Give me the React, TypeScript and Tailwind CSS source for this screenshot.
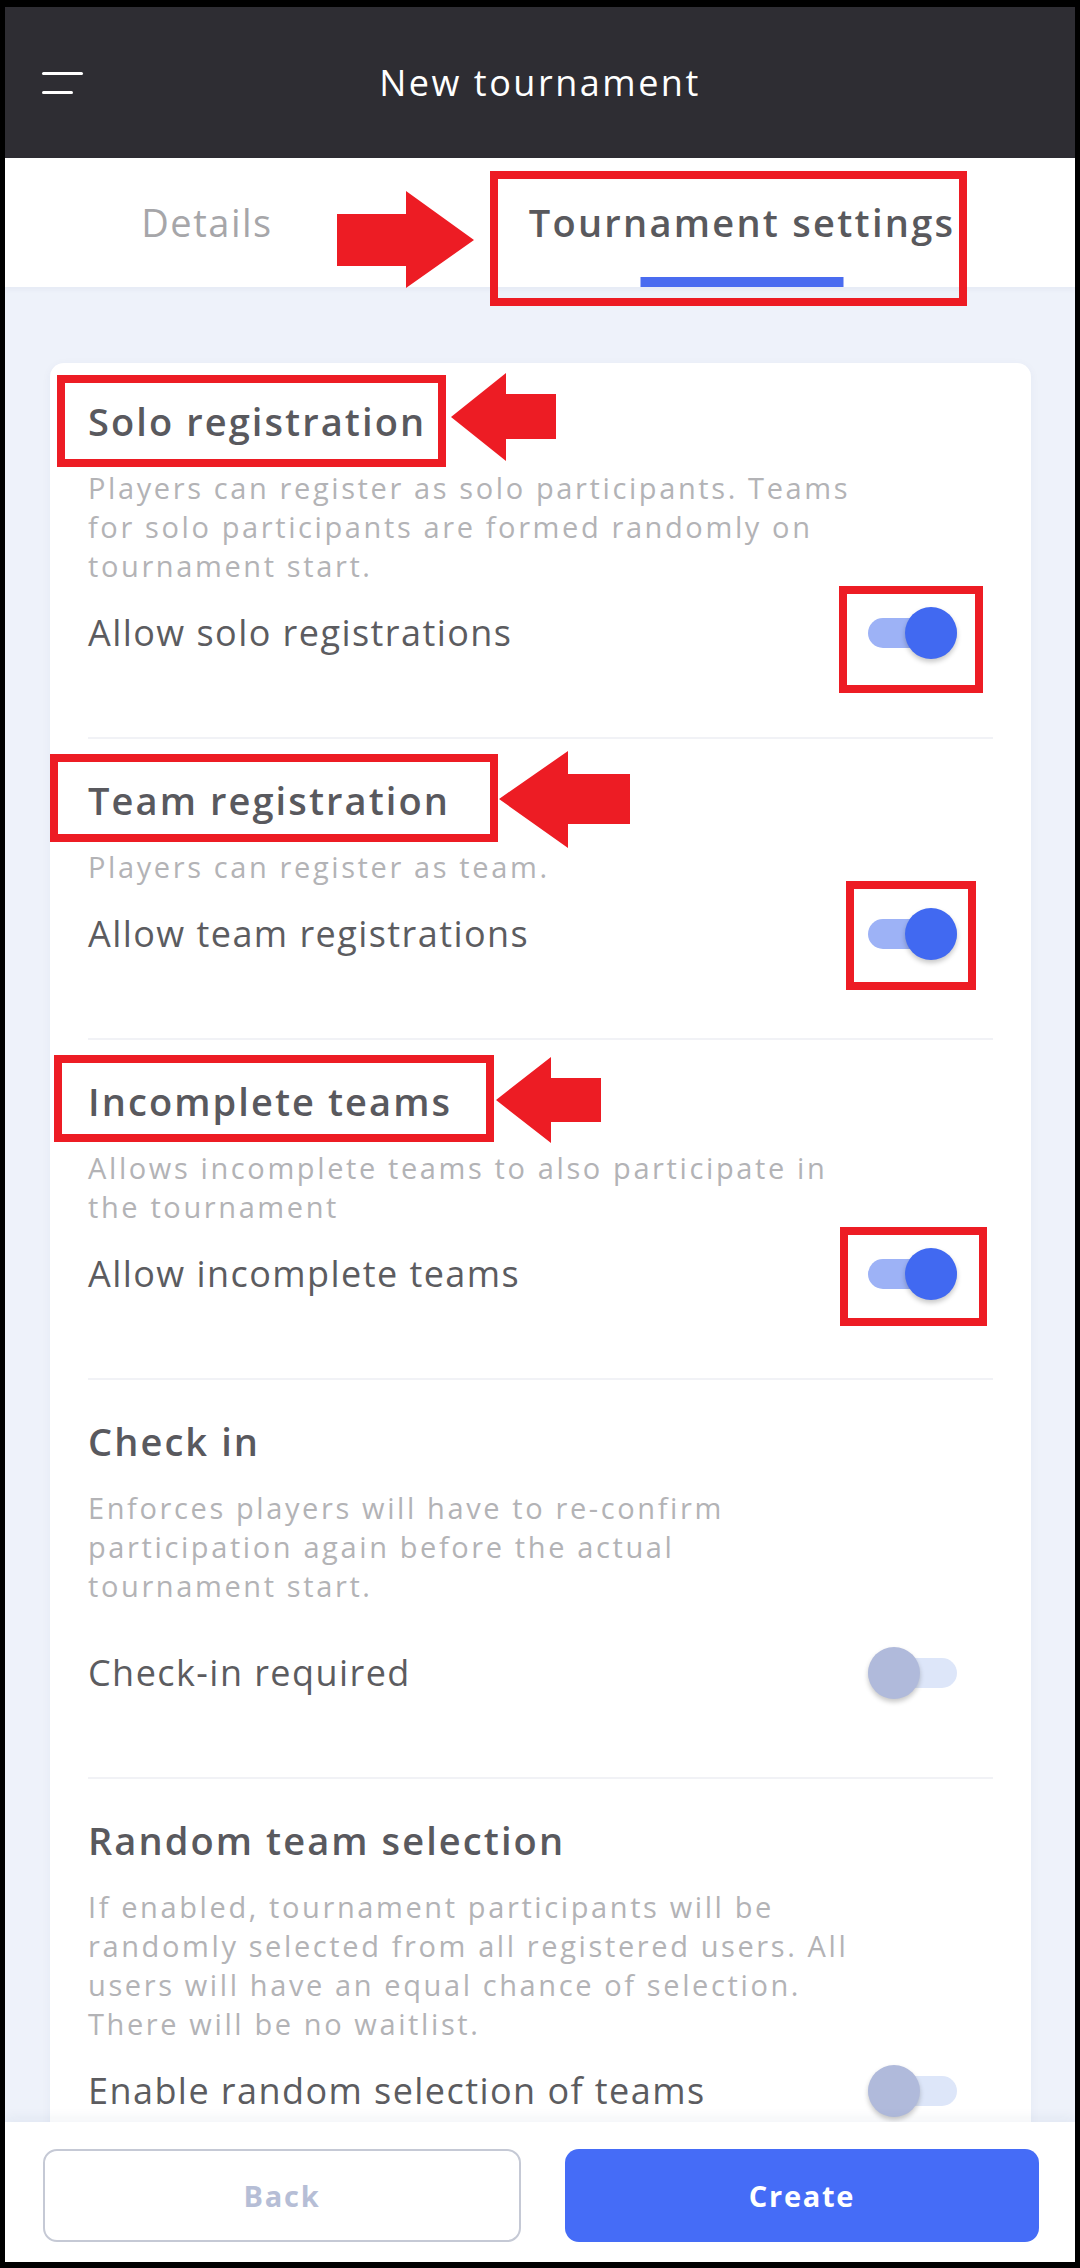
import React from 'react';

type Section = {
  title: string;
  lines: string[];
  label: string;
  on: boolean;
  extraGap?: boolean;
};

const SECTIONS: Section[] = [
  {
    title: 'Solo registration',
    lines: [
      'Players can register as solo participants. Teams',
      'for solo participants are formed randomly on',
      'tournament start.',
    ],
    label: 'Allow solo registrations',
    on: true,
  },
  {
    title: 'Team registration',
    lines: ['Players can register as team.'],
    label: 'Allow team registrations',
    on: true,
  },
  {
    title: 'Incomplete teams',
    lines: ['Allows incomplete teams to also participate in', 'the tournament'],
    label: 'Allow incomplete teams',
    on: true,
  },
  {
    title: 'Check in',
    lines: [
      'Enforces players will have to re-confirm',
      'participation again before the actual',
      'tournament start.',
    ],
    label: 'Check-in required',
    on: false,
    extraGap: true,
  },
  {
    title: 'Random team selection',
    lines: [
      'If enabled, tournament participants will be',
      'randomly selected from all registered users. All',
      'users will have an equal chance of selection.',
      'There will be no waitlist.',
    ],
    label: 'Enable random selection of teams',
    on: false,
  },
];

function Toggle({ on }: { on: boolean }) {
  return (
    <div className="relative w-[89px] h-[52px] flex items-center shrink-0">
      <div className={`w-full h-[30px] rounded-full ${on ? 'bg-[#9db2f6]' : 'bg-[#dde6f9]'}`} />
      <div
        className={`absolute top-0 w-[52px] h-[52px] rounded-full shadow-[0_3px_5px_rgba(0,0,0,0.22)] ${
          on ? 'right-0 bg-[#4169f1]' : 'left-0 bg-[#b0badb]'
        }`}
      />
    </div>
  );
}

function SettingSection({ s, first }: { s: Section; first: boolean }) {
  return (
    <div className={`${first ? 'pt-[35px]' : 'pt-[38px]'} pb-[77px] border-b-2 border-[#f1f2f6]`}>
      <h3 className="text-[38px] leading-[46px] font-semibold tracking-[0.055em] text-[#59595e]">{s.title}</h3>
      <p className="mt-[24px] text-[29px] leading-[39px] tracking-[0.09em] text-[#b3b3b6] whitespace-nowrap">
        {s.lines.map((l, i) => (
          <React.Fragment key={i}>
            {l}
            {i < s.lines.length - 1 && <br />}
          </React.Fragment>
        ))}
      </p>
      <div className={`${s.extraGap ? 'mt-[41px]' : 'mt-[21px]'} flex items-center justify-between pr-[36px]`}>
        <span className="text-[36px] tracking-[0.04em] text-[#5c5c60]">{s.label}</span>
        <Toggle on={s.on} />
      </div>
    </div>
  );
}

// red markup drawn over the screenshot
function Annotations() {
  const boxes: [number, number, number, number][] = [
    [490, 171, 967, 306],
    [57, 375, 446, 467],
    [839, 586, 983, 693],
    [50, 754, 498, 842],
    [846, 881, 976, 990],
    [54, 1055, 494, 1142],
    [840, 1227, 987, 1326],
  ];
  const arrows = [
    '337,214 406,214 406,191 474,240 406,288 406,266 337,266',
    '556,394 506,394 506,373 451,417 506,461 506,439 556,439',
    '630,774 568,774 568,751 499,799 568,848 568,824 630,824',
    '601,1078 551,1078 551,1057 496,1100 551,1143 551,1122 601,1122',
  ];
  return (
    <svg className="absolute inset-0 z-30 pointer-events-none" width={1080} height={2268} viewBox="0 0 1080 2268">
      {boxes.map(([x0, y0, x1, y1], i) => (
        <rect key={i} x={x0 + 4} y={y0 + 4} width={x1 - x0 - 8} height={y1 - y0 - 8} fill="none" stroke="#ed1c24" strokeWidth={8} />
      ))}
      {arrows.map((p, i) => (
        <polygon key={i} points={p} fill="#ed1c24" />
      ))}
    </svg>
  );
}

export default function App() {
  return (
    <div className="relative w-[1080px] h-[2268px] bg-black pt-[7px] px-[5px] pb-[6px] font-['Open_Sans',sans-serif]">
      <div className="h-full flex flex-col overflow-hidden bg-[#eef2fa]">
        {/* header */}
        <div className="h-[151px] shrink-0 bg-[#2e2d33] grid grid-cols-[1fr_auto_1fr] items-center">
          <div className="pl-[37px] flex flex-col gap-[16px]">
            <div className="w-[41px] h-[3px] bg-white rounded-full" />
            <div className="w-[31px] h-[3px] bg-white rounded-full" />
          </div>
          <div className="text-[36px] tracking-[0.07em] text-white">New tournament</div>
          <div />
        </div>

        {/* tabs */}
        <div className="h-[129px] shrink-0 bg-white flex shadow-[0_2px_6px_rgba(40,60,120,0.05)] relative z-10">
          <div className="w-[404px] flex items-center justify-center">
            <span className="text-[38px] tracking-[0.04em] text-[#a6a6a9]">Details</span>
          </div>
          <div className="flex-1 relative flex items-center justify-center">
            <span className="text-[38px] font-semibold tracking-[0.06em] text-[#59595d]">Tournament settings</span>
            <div className="absolute bottom-0 left-1/2 -translate-x-1/2 w-[203px] h-[10px] bg-[#4a6cf0]" />
          </div>
        </div>

        {/* content */}
        <div className="flex-1 overflow-hidden pt-[76px] pl-[45px] pr-[44px]">
          <div className="bg-white rounded-[14px] px-[38px] shadow-[0_2px_10px_rgba(40,60,120,0.05)]">
            {SECTIONS.map((s, i) => (
              <SettingSection key={s.title} s={s} first={i === 0} />
            ))}
          </div>
        </div>

        {/* footer */}
        <div className="h-[140px] shrink-0 bg-white pt-[27px] pl-[38px] pr-[36px] flex gap-[44px] shadow-[0_-4px_12px_rgba(40,60,120,0.06)] relative z-10">
          <button className="flex-1 h-[93px] rounded-[14px] border-2 border-[#c5c9d5] bg-white text-[29px] font-bold tracking-[0.06em] text-[#b6bed6]">
            Back
          </button>
          <button className="flex-1 h-[93px] rounded-[14px] bg-[#456cf7] text-[29px] font-bold tracking-[0.06em] text-white">
            Create
          </button>
        </div>
      </div>
      <Annotations />
    </div>
  );
}
